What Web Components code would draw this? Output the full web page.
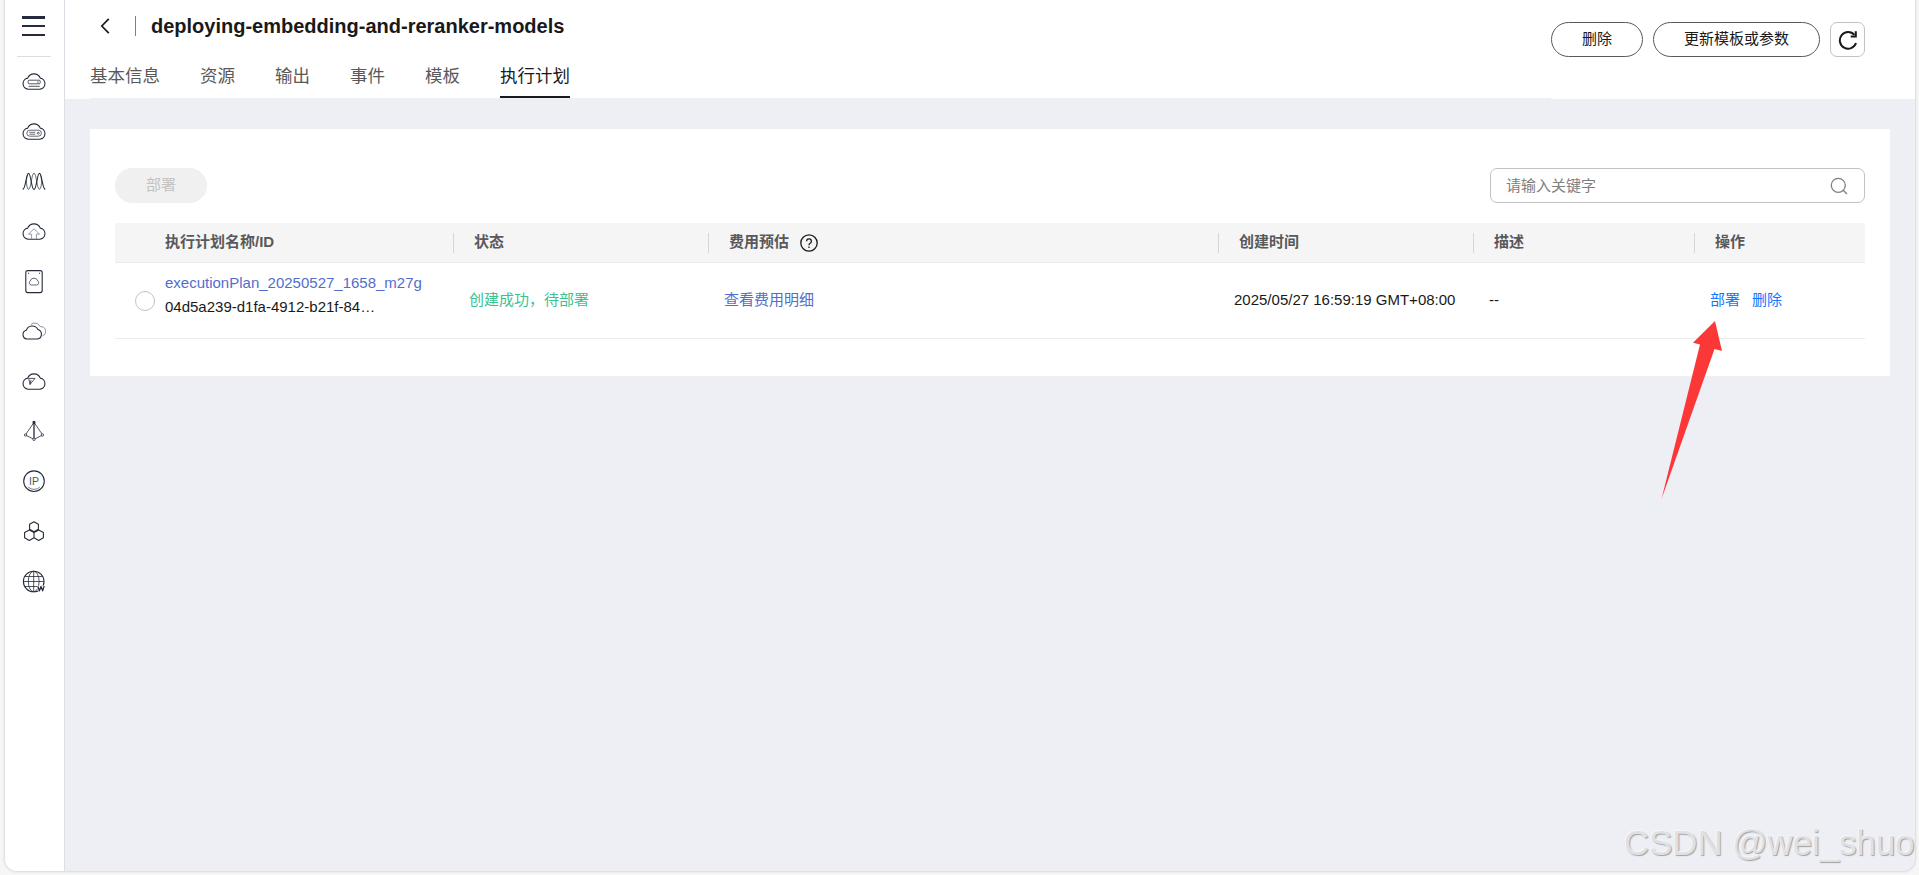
<!DOCTYPE html>
<html lang="zh-CN">
<head>
<meta charset="utf-8">
<title>deploying-embedding-and-reranker-models</title>
<style>
html,body{margin:0;height:100%;overflow:hidden;background:#f6f6f6}
body{font-family:"Liberation Sans","Noto Sans CJK SC",sans-serif;font-size:15px;color:#191919}
</style>
</head>
<body>
<stack-app></stack-app>
<script>
const define = (name, html) => customElements.define(name, class extends HTMLElement {
  constructor() {
    super();
    const t = document.createElement('template');
    t.innerHTML = html;
    this.attachShadow({mode: 'open'}).append(t.content.cloneNode(true));
  }
});

const CLOUD = '<path d="M6.2 19.2A5.6 5.6 0 0 1 5.7 8.1 6.8 6.8 0 0 1 18.3 8.1 5.6 5.6 0 0 1 17.8 19.2Z"/>';
const ICONS = {
  ecs: CLOUD + '<g stroke-width=".8"><rect x="6.2" y="10.2" width="12" height="3.6" rx="1"/><path d="M6.7 16.3h11"/></g><path d="M15.3 12h1.2"/>',
  bms: CLOUD + '<g stroke-width=".7"><rect x="4.8" y="10.2" width="14.6" height="6" rx="3"/><path d="M7.3 12.3h6M7.3 14.2h6"/><circle cx="16.3" cy="13.2" r="1"/></g>',
  as: '<path d="M.7 19.4C4 18.5 4 3.2 6.5 3.2S9.3 19.4 12 19.4 15 3.2 17.5 3.2 20 18.5 23.3 19.4"/><path stroke-width=".7" d="M6.4 19.4C9.3 19.4 9.4 3.2 12 3.2s2.7 16.2 5.6 16.2M6.4 19.4C3.6 16.5 4 6 6.5 3.2M17.6 19.4c2.8-2.9 2.4-13.4-.1-16.2"/>',
  upload: CLOUD + '<path stroke="#7b8292" stroke-width=".8" d="M9.6 18.8v-4.6H6.5L12 8.7l5.5 5.5h-3.1v4.6"/>',
  disk: '<rect x="3.8" y="0.6" width="16.4" height="22" rx="2"/><path stroke-width=".7" d="M9.1 15a2.3 2.3 0 0 1-.9-4.1 4 4 0 0 1 7.6 0 2.3 2.3 0 0 1-.9 4.1z"/><path d="M6 3.3h1.1M17 3.3h1.1"/>',
  clouds: '<path d="M4.9 19a4.5 4.5 0 0 1-.6-8.8 6.3 6.3 0 0 1 11.6-.7A4.9 4.9 0 0 1 15.5 19Z"/><path stroke="#6c7484" stroke-width=".8" d="M8.8 4.5a6 6 0 0 1 9.4 2.2 4.7 4.7 0 0 1 2.2 9.1"/>',
  plane: CLOUD + '<path stroke-width=".8" d="M6.7 8.4l6.3 0-5 6zM9 10l-1 4.5"/>',
  prism: '<path stroke-width=".8" d="M12 2.4L3.3 15 12 19.3l8.7-4.3z"/><path stroke-width="1.3" d="M12 2.4v16"/><circle cx="12" cy="2.4" r="1" fill="#252b3a"/><g fill="#fff" stroke-width=".8"><circle cx="3.6" cy="15" r="1.2"/><circle cx="20.4" cy="15" r="1.2"/><circle cx="12" cy="19.3" r="1.2"/></g>',
  ip: '<circle cx="12" cy="11.2" r="10.3"/><text x="12" y="14.6" text-anchor="middle" font-size="10.5" font-family="Liberation Sans" fill="#4f5666" stroke="none">IP</text><path stroke-width=".6" d="M6.2 17.1a8.5 8.5 0 0 0 11.6 0"/>',
  hex: '<path d="M7.6 4.3L12 1.8l4.4 2.5v5L12 11.8 7.6 9.3zM2.6 12.6L7.3 10l4.7 2.6v5.2l-4.7 2.6-4.7-2.6zM12 12.6l4.7-2.6 4.7 2.6v5.2l-4.7 2.6-4.7-2.6"/>',
  web: '<circle cx="11.7" cy="11.5" r="10.3"/><g stroke-width=".8"><path d="M1.6 11.5h20.2M3 6.5h17.4M3 16.5h12M11.7 1.3v20.4"/><ellipse cx="11.7" cy="11.5" rx="5.4" ry="10.3"/></g><path stroke="#fff" stroke-width="3" d="M16.2 16.1l1.6 4.7 1.6-4.4 1.6 4.4 1.6-4.7"/><path stroke-width="1.3" d="M15.8 16.1l1.6 4.7 1.6-4.4 1.6 4.4 1.6-4.7"/>'
};

customElements.define('nav-icon', class extends HTMLElement {
  connectedCallback() {
    this.attachShadow({mode: 'open'}).innerHTML = `<style>
      :host{display:block;width:24px;height:24px}
      svg{display:block;fill:none;stroke:#252b3a;stroke-width:1.1;stroke-linejoin:round}
    </style><svg width="24" height="24" viewBox="0 0 24 24">${ICONS[this.getAttribute('name')]}</svg>`;
  }
});

define('side-nav', `<style>
  :host{display:flex;flex-direction:column;align-items:center;box-sizing:border-box;width:60px;background:#fff;border-right:1px solid #dcdee6;padding:16px 2px 0 0}
  .menu{display:flex;flex-direction:column;gap:6.3px;width:23px}
  .menu i{height:2.5px;background:#252b3a}
  hr{width:34px;height:1px;border:0;background:#dcdee6;margin:20px 0 13px}
  nav{display:flex;flex-direction:column;gap:26px}
</style>
<div class="menu"><i></i><i></i><i></i></div><hr>
<nav>${Object.keys(ICONS).map(n => `<nav-icon name="${n}"></nav-icon>`).join('')}</nav>`);

define('pill-button', `<style>
  :host{display:flex;align-items:center;justify-content:center;box-sizing:border-box;height:35px;padding:0 30px 2px;border:1px solid #595959;border-radius:18px;line-height:20px;white-space:nowrap}
  :host([disabled]){background:#f0f0f0;border-color:#f0f0f0;color:#c2c2c2}
</style><slot></slot>`);

define('tab-item', `<style>
  :host{display:block;box-sizing:border-box;height:44px;padding-top:7px;font-size:17.5px;line-height:30px;color:#595959;border-bottom:2px solid transparent}
  :host([active]){color:#191919;border-color:#191919}
</style><slot></slot>`);

define('page-header', `<style>
  :host{display:flex;justify-content:space-between;box-sizing:border-box;height:99px;background:#fff;padding:0 50px 0 25px}
  .left{flex:1;display:flex;flex-direction:column;border-bottom:1px solid #eeeff5;box-sizing:border-box}
  .title{display:flex;align-items:center;height:54px;box-sizing:border-box;padding:0 0 2px 10px}
  .title svg{display:block}
  .bar{width:1px;height:20px;background:#808080;margin:0 15px 0 25px}
  h1{font-size:20px;line-height:24px;margin:0;font-weight:700;white-space:nowrap}
  .tabs{display:flex;gap:40px}
  .actions{display:flex;gap:10px;padding-top:22px}
  .refresh{display:flex;align-items:center;justify-content:center;box-sizing:border-box;width:35px;height:35px;border:1px solid #c2c2c2;border-radius:7px}
</style>
<div class="left">
  <div class="title"><svg width="10" height="18" viewBox="0 0 10 18" fill="none" stroke="#191919" stroke-width="1.7"><path d="M8.8 1.8L1.8 9l7 7.2"/></svg><span class="bar"></span><h1>deploying-embedding-and-reranker-models</h1></div>
  <div class="tabs"><tab-item>基本信息</tab-item><tab-item>资源</tab-item><tab-item>输出</tab-item><tab-item>事件</tab-item><tab-item>模板</tab-item><tab-item active>执行计划</tab-item></div>
</div>
<div class="actions"><pill-button>删除</pill-button><pill-button>更新模板或参数</pill-button>
<div class="refresh"><svg width="20" height="20" viewBox="0 0 20 20" fill="none" stroke="#191919" stroke-width="2"><path d="M18 13A8.3 8.3 0 1 1 16.4 4.9"/><path d="M17.8 1.2v5.2h-5.1"/></svg></div></div>`);

define('search-box', `<style>
  :host{display:flex;align-items:center;justify-content:space-between;box-sizing:border-box;width:375px;height:35px;border:1px solid #c2c2c2;border-radius:7px;padding:0 16px 0 15px;color:#808080}
  span{line-height:20px}
</style><span>请输入关键字</span><svg width="18" height="18" viewBox="0 0 18 18" fill="none" stroke="#808080" stroke-width="1.3"><circle cx="8.3" cy="8.3" r="7"/><path d="M13.2 13.2l3.8 3.8"/></svg>`);

define('plan-table', `<style>
  :host{display:block}
  .row{display:grid;grid-template-columns:50px 288px 255px 510px 255px 221px 171px;box-sizing:border-box;white-space:nowrap;border-bottom:1px solid #ebebeb}
  .head{height:40px;background:#f5f5f5;font-weight:600;color:#595959;align-items:center}
  .head>div{display:flex;align-items:center;height:20px;padding-left:20px;border-left:1px solid #d6d6d6;line-height:20px}
  .head>div:nth-child(-n+2){padding-left:0;border:0}
  .head span{margin-top:-2px}
  .head svg{margin-left:11px}
  .body{height:76px;padding-bottom:2px;align-items:center}
  .body>div{padding-left:16px;line-height:24px}
  .body>.name{padding:0 0 9px}
  .pick{width:18px;height:18px;border:1px solid #c2c2c2;border-radius:50%;margin-left:20px;margin-top:2px}
  .body>.pick{padding:0}
  .name span{display:block}
  .link{color:#526ecc}
  .ok{color:#3ac295}
  .ops{display:flex;gap:12px;color:#1476ff}
</style>
<div class="row head"><div></div><div><span>执行计划名称/ID</span></div><div><span>状态</span></div>
<div><span>费用预估</span><svg width="18" height="18" viewBox="0 0 18 18" fill="none" stroke="#191919" stroke-width="1.3"><circle cx="9" cy="9" r="8.2"/><path d="M6.6 7.2a2.4 2.4 0 1 1 3.6 2.1c-.9.5-1.2.9-1.2 1.7v.3M9 12.6v1.4"/></svg></div>
<div><span>创建时间</span></div><div><span>描述</span></div><div><span>操作</span></div></div>
<div class="row body"><div class="pick"></div><div class="name"><span class="link">executionPlan_20250527_1658_m27g</span><span class="id">04d5a239-d1fa-4912-b21f-84…</span></div>
<div class="ok">创建成功，待部署</div><div class="link">查看费用明细</div><div>2025/05/27 16:59:19 GMT+08:00</div><div>--</div><div class="ops"><span>部署</span><span>删除</span></div></div>`);

define('plan-panel', `<style>
  :host{display:block;box-sizing:border-box;height:247px;margin:30px 25px 0;padding:39px 25px 0;background:#fff}
  .tools{display:flex;justify-content:space-between;margin-bottom:20px}
</style><div class="tools"><pill-button disabled>部署</pill-button><search-box></search-box></div><plan-table></plan-table>`);

define('pointer-arrow', `<style>
  :host{position:absolute;left:1661px;top:320px}
  svg{display:block}
</style><svg width="64" height="182"><path fill="#fb3737" d="M54 1L61 31 53.5 29 .5 179 39 24.5 32 22.7Z"/></svg>`);

define('water-mark', `<style>
  :host{position:absolute;left:1624px;top:822px;font-size:34.8px;line-height:42px;color:#dfe0e2;text-shadow:-1px -1px 0 #f6f6f8,1px 1px 1px #a0a1a5;white-space:nowrap}
</style><slot></slot>`);

define('stack-app', `<style>
  :host{display:flex;box-sizing:border-box;height:100vh;padding:0 4px 4px 5px}
  .frame{flex:1;display:flex;overflow:hidden;background:#eeeff5;border-radius:0 0 12px 12px;box-shadow:0 0 3px #bbb}
  main{flex:1;min-width:0}
</style>
<div class="frame"><side-nav></side-nav><main><page-header></page-header><plan-panel></plan-panel></main></div>
<pointer-arrow></pointer-arrow><water-mark>CSDN @wei_shuo</water-mark>`);
</script>
</body>
</html>
